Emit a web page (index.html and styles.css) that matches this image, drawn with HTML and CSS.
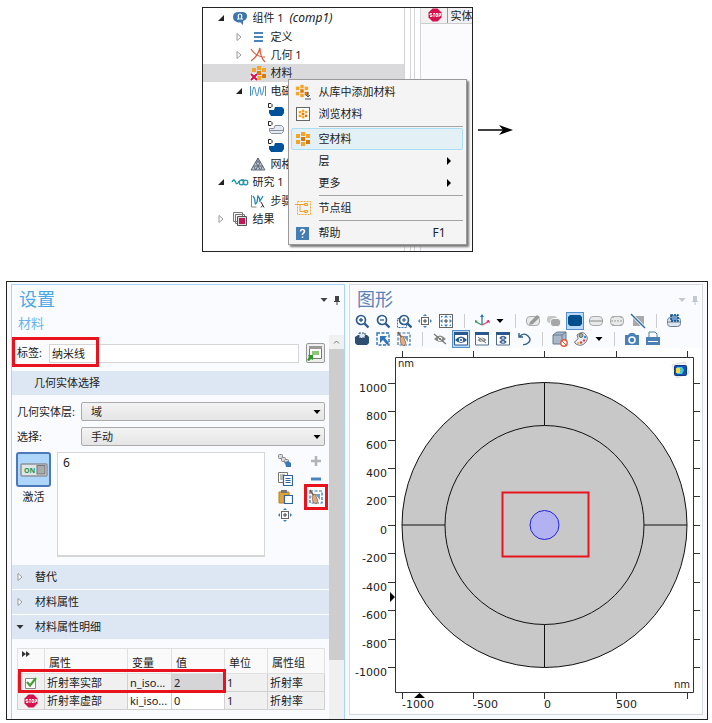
FILE: index.html
```html
<!DOCTYPE html>
<html lang="zh-CN">
<head>
<meta charset="utf-8">
<meta name="viewport" content="width=device-width, initial-scale=1">
<title>材料设置</title>
<link rel="stylesheet" href="styles.css">
</head>
<body>
<svg class="defs" aria-hidden="true">
  <symbol id="blocks" viewBox="0 0 16 16">
    <g fill="#f5a42a"><rect x="6" y="1" width="4" height="4"/><rect x="1" y="3" width="4" height="4"/><rect x="11" y="3" width="4" height="4"/><rect x="1" y="9" width="4" height="4"/><rect x="6" y="11" width="4" height="4"/></g>
    <g fill="#d9780c"><rect x="6" y="6" width="4" height="4"/><rect x="11" y="9" width="4" height="4"/></g>
  </symbol>
  <symbol id="open" viewBox="0 0 12 12"><path d="M9 3v6H3z" fill="#222"/></symbol>
  <symbol id="closed" viewBox="0 0 12 12"><path d="M4 2.500v7L8 6z" fill="#fff" stroke="#999"/></symbol>
  <symbol id="down" viewBox="0 0 10 10"><path d="M1.500 3h7L5 7z" fill="currentColor"/></symbol>
  <symbol id="pin" viewBox="0 0 10 10"><path d="M3 1h4v5h1v1H5.500v3h-1V7H2V6h1z" fill="currentColor"/></symbol>
  <symbol id="stop" viewBox="0 0 14 14"><path d="M4.500 .5h5l4 4v5l-4 4h-5l-4-4v-5z" fill="#d5104c"/><path d="M4 5.500H2v1.500h2v1.500H2M5 5.500h2M6 5.500v3.500M8 5.500h1.500v3H8zM11 9V5.500h1.500v2H11" fill="none" stroke="#fff" stroke-width=".9"/></symbol>
  <symbol id="domain" viewBox="0 0 18 16"><path d="M8 5h7l2 2v4l-2 3H4l-2-3V8h5z" fill="#00529b"/><path d="M1.500 1.500h2.500l1 1v2l-1 1H1.500z" fill="#fff" stroke="#222"/></symbol>
  <symbol id="lens" viewBox="0 0 16 16"><circle cx="7" cy="7" r="4.500" fill="#fff" stroke="#2b5a8c" stroke-width="1.700"/><path d="M10.500 10.500l4 4" stroke="#2b5a8c" stroke-width="2.400"/></symbol>
  <symbol id="target" viewBox="0 0 16 16"><rect x="4.500" y="4.500" width="7" height="7" fill="#fff" stroke="#666"/><path d="M8 6v4M6 8h4" stroke="#444"/><path d="M8 1l2 2H6zM8 15l2-2H6zM1 8l2-2v4zM15 8l-2-2v4z" fill="#3e7fbe"/></symbol>
  <symbol id="broom" viewBox="0 0 16 16"><rect x="2" y="2" width="12" height="12" fill="none" stroke="#3474b4" stroke-width="1.200" stroke-dasharray="3 1.500"/><path d="M7 5h5v6z" fill="#6f9fd0"/><path d="M2 1l4 6" stroke="#8a5a32" stroke-width="1.500"/><path d="M4 7l3-2 3 7-2 3-3-2z" fill="#d8ad87" stroke="#9a683e" stroke-width=".8"/></symbol>
  <symbol id="eye" viewBox="0 0 16 16"><path d="M2 8q6-7 12 0-6 6-12 0z" fill="currentColor"/><circle cx="8" cy="8" r="2.200" fill="#fff"/><circle cx="8" cy="8" r="1.100" fill="currentColor"/></symbol>
  <symbol id="slab" viewBox="0 0 16 16"><rect x="1.500" y="3.500" width="13" height="9" rx="3.500" fill="#e9e9eb" stroke="#aaa"/></symbol>
</svg>

<main class="page">
<section class="intro" aria-label="模型开发器">
  <div class="window builder">
    <nav class="tree" aria-label="模型树">
      <ul>
        <li><div class="row"><svg class="twist"><use href="#open"/></svg><svg class="node" viewBox="0 0 18 16"><path d="M2 7q0-5 6-5h3q5 0 5 4 0 4-4 5v4l-3-3q-1 1-3 0-4-1-4-5z" fill="#3d76ad"/><path d="M6 9h2Q6 4 9 4t1 5h2" fill="none" stroke="#fff" stroke-width="1.200"/></svg><span>组件 1&nbsp; <i>(comp1)</i></span></div>
          <ul>
            <li><div class="row level2"><svg class="twist"><use href="#closed"/></svg><svg class="node" viewBox="0 0 18 16"><path d="M5 4h9M5 8h9M5 12h9" stroke="#4a83bd" stroke-width="1.800"/></svg><span>定义</span></div></li>
            <li><div class="row level2"><svg class="twist"><use href="#closed"/></svg><svg class="node" viewBox="0 0 18 16"><path d="M2 2q5 8 14 8M2 14Q9 9 11 1q0 9 5 14" fill="none" stroke="#dd5a3d" stroke-width="1.200"/></svg><span>几何 1</span></div></li>
            <li><div class="row level2 current"><span class="twist"></span><svg class="node" viewBox="0 0 18 16"><use href="#blocks" x="2" width="16" height="16"/><path d="M2 9l6 6M8 9l-6 6" stroke="#fff" stroke-width="4"/><path d="M2 9l6 6M8 9l-6 6" stroke="#d5104c" stroke-width="2"/></svg><span>材料</span></div></li>
            <li><div class="row level2"><svg class="twist"><use href="#open"/></svg><svg class="node" viewBox="0 0 18 16"><path d="M1.500 3v10M16.500 3v10M3 12q2-14 3.500-4t3 0q1-8 2 0t2.500 1l1-6" fill="none" stroke="#4a8fc7"/></svg><span>电磁</span></div>
              <ul>
                <li><div class="row level3"><span class="twist"></span><svg class="node"><use href="#domain"/></svg></div></li>
                <li><div class="row level3"><span class="twist"></span><svg class="node" viewBox="0 0 18 16"><path d="M8 5.500h6.500l2 2v4l-2 2h-10l-2-2v-3H7zM2.500 10.500h14" fill="#e6ebf2" stroke="#87919d"/><path d="M1.500 1.500h2.500l1 1v2l-1 1H1.500z" fill="#fff" stroke="#222"/></svg></div></li>
                <li><div class="row level3"><span class="twist"></span><svg class="node"><use href="#domain"/></svg></div></li>
              </ul>
            </li>
            <li><div class="row level2"><span class="twist"></span><svg class="node" viewBox="0 0 18 16"><path d="M9 2l7 12H2zM6.500 6h5M4.500 10h9M6.500 6l5 8M11.500 6l-5 8M4.500 10l2 4M13.500 10l-2 4M9 2v4" fill="#bac4cf" stroke="#56616d" stroke-width=".9"/></svg><span>网格</span></div></li>
          </ul>
        </li>
        <li><div class="row"><svg class="twist"><use href="#open"/></svg><svg class="node" viewBox="0 0 18 16"><path d="M1 8q2-4 3.500 0t3.500-1" fill="none" stroke="#2096a3" stroke-width="1.300"/><circle cx="10.500" cy="8.500" r="2.300" fill="none" stroke="#2096a3" stroke-width="1.300"/><circle cx="14.500" cy="8.500" r="2.300" fill="none" stroke="#2096a3" stroke-width="1.300"/><path d="M10 6q2-1 3 0" fill="none" stroke="#2096a3"/></svg><span>研究 1</span></div>
          <ul>
            <li><div class="row level2"><span class="twist"></span><svg class="node" viewBox="0 0 18 16"><path d="M2.500 2v12h5" fill="none" stroke="#888"/><path d="M4 3q2 2 2 6t2 0l1-6q2 2 2 6M11 8l3-5" fill="none" stroke="#2387b4" stroke-width="1.300"/><path d="M12 9l3 5.500M14 12l-2 2.500" stroke="#333" fill="none"/></svg><span>步骤</span></div></li>
          </ul>
        </li>
        <li><div class="row"><svg class="twist"><use href="#closed"/></svg><svg class="node" viewBox="0 0 18 16"><path d="M2.500 1.500h9v9h-9zM4.500 3.500h9v9h-9z" fill="#f5f5f5" stroke="#777"/><path d="M6.500 5.500h9v9h-9z" fill="#ddd" stroke="#555"/><path d="M8 7h6v6H8z" fill="#c3175c"/></svg><span>结果</span></div></li>
      </ul>
    </nav>
    <div class="splitter"></div>
    <div class="side">
      <div class="side-head"><svg class="stop"><use href="#stop"/></svg><span>实体</span></div>
      <div class="side-body"></div>
    </div>
    <div class="menu" role="menu">
      <button role="menuitem"><svg viewBox="0 0 16 16"><use href="#blocks" width="14" height="14"/><path d="M13 8v5M11 11l2 2 2-2M10 15h6" fill="none" stroke="#555"/></svg><span>从库中添加材料</span></button>
      <button role="menuitem"><svg viewBox="0 0 16 16"><rect x="1.500" y="1.500" width="13" height="13" fill="#fff" stroke="#666"/><use href="#blocks" x="3" y="3" width="10" height="10"/></svg><span>浏览材料</span></button>
      <hr>
      <button role="menuitem" class="hot"><svg><use href="#blocks"/></svg><span>空材料</span></button>
      <button role="menuitem"><svg></svg><span>层</span><svg class="more" viewBox="0 0 6 8"><path d="M1 0l4 4-4 4z"/></svg></button>
      <button role="menuitem"><svg></svg><span>更多</span><svg class="more" viewBox="0 0 6 8"><path d="M1 0l4 4-4 4z"/></svg></button>
      <hr>
      <button role="menuitem"><svg viewBox="0 0 16 16"><rect x="2.500" y="1.500" width="13" height="13" fill="none" stroke="#f0ab36" stroke-dasharray="2 1"/><path d="M0 4.500h5v7h4M5 4.500h4" fill="none" stroke="#efa22e"/><path d="M9.500 3.500h3v2h-3zM9.500 10.500h3v2h-3z" fill="#fbe2b2" stroke="#efa22e"/></svg><span>节点组</span></button>
      <hr>
      <button role="menuitem"><svg viewBox="0 0 16 16"><rect x="1" y="2" width="13" height="13" fill="#477db5"/><path d="M5.500 6.500q0-2 2-2t2 2q0 1-2 2.500v1M7.500 11.500v1.500" fill="none" stroke="#fff" stroke-width="1.500"/></svg><span>帮助</span><kbd>F1</kbd></button>
    </div>
  </div>
  <svg class="arrow" viewBox="0 0 35 10"><path d="M0 5h25" stroke="#000" stroke-width="1.500"/><path d="M21 0l14 5-14 5 4-5z"/></svg>
</section>

<section class="window desk">
  <section class="panel settings">
    <header class="head"><h2>设置</h2><svg class="mini"><use href="#down"/></svg><svg class="mini"><use href="#pin"/></svg></header>
    <p class="subtitle">材料</p>
    <div class="scroller">
      <div class="content">
        <div class="name-row">
          <label for="name">标签:</label><input id="name" type="text" value="纳米线">
          <button class="tool-box" aria-label="转到源"><svg viewBox="0 0 16 16"><path d="M2.500 1.500h12v12h-12z" fill="#fff" stroke="#777"/><path d="M2 1h13v3H2z" fill="#999"/><path d="M5 7h7M5 9h7" stroke="#69b34b" stroke-width="1.500"/><path d="M0 15l2-3-1-2h5v5l-2-1-2 2z" fill="#319332"/></svg></button>
          <span class="mark mark-name"></span>
        </div>
        <h3 class="bar plain">几何实体选择</h3>
        <div class="form">
          <label for="level">几何实体层:</label>
          <span class="pick"><select id="level"><option>域</option></select><svg><use href="#down"/></svg></span>
          <label for="choice">选择:</label>
          <span class="pick"><select id="choice"><option>手动</option></select><svg><use href="#down"/></svg></span>
        </div>
        <div class="selection">
          <div class="active"><button id="active" aria-labelledby="active-label"><svg viewBox="0 0 28 14"><rect x="1" y="1" width="26" height="12" rx="1" fill="#dfe5e6" stroke="#8d949b" stroke-width="1.500"/><rect x="17" y="2.500" width="8" height="8.500" fill="#aaa" stroke="#777"/><text x="4" y="10">ON</text></svg></button><label id="active-label" for="active">激活</label></div>
          <div class="list">6</div>
          <div class="icons">
            <button aria-label="创建选择"><svg viewBox="0 0 16 16"><g fill="#ddd" stroke="#888"><rect x="1.500" y="1.500" width="4" height="4" rx="1"/><rect x="4.500" y="4.500" width="4" height="4" rx="1"/><rect x="7.500" y="6.500" width="4" height="4" rx="1"/></g><path d="M8 9l3-1 3 2v4H9z" fill="#3c78b4"/></svg></button>
            <button aria-label="添加到选择"><svg viewBox="0 0 16 16"><path d="M8 3v10M3 8h10" stroke="#b3b3b5" stroke-width="2.500"/></svg></button>
            <button aria-label="复制选择"><svg viewBox="0 0 16 16"><path d="M1.500 1.500h9v10h-9zM3 4h5M3 6h5M3 8h3" fill="#fff" stroke="#777"/><path d="M6.500 4.500h9v10h-9zM8.500 7.500h5M8.500 9.500h5M8.500 11.500h5" fill="#fff" stroke="#2f659f" stroke-width="1.200"/></svg></button>
            <button aria-label="从选择中移除"><svg viewBox="0 0 16 16"><path d="M3 8h10" stroke="#4a84c0" stroke-width="3"/></svg></button>
            <button aria-label="粘贴选择"><svg viewBox="0 0 16 16"><path d="M2 3h10v11H2z" fill="#dda33b" stroke="#b77e1e"/><path d="M4 1h6v3H4z" fill="#777"/><path d="M7.500 6.500h8v8h-8z" fill="#fff" stroke="#2f659f" stroke-width="1.200"/></svg></button>
            <button aria-label="清除选择"><svg><use href="#broom"/></svg><span class="mark mark-icon"></span></button>
            <button aria-label="缩放到选择"><svg><use href="#target"/></svg></button>
          </div>
        </div>
        <div class="bars">
          <h3 class="bar"><svg class="twist"><use href="#closed"/></svg>替代</h3>
          <h3 class="bar"><svg class="twist"><use href="#closed"/></svg>材料属性</h3>
          <h3 class="bar"><svg class="twist" viewBox="-1 -1 12 12"><use href="#down" width="10" height="10"/></svg>材料属性明细</h3>
        </div>
        <div class="table-wrap">
          <table>
            <colgroup><col class="c-state"><col class="c-prop"><col class="c-var"><col class="c-value"><col class="c-unit"><col class="c-group"></colgroup>
            <thead><tr><th class="first"><svg viewBox="0 0 8 6"><path d="M0 0l4 3-4 3zM4 0l4 3-4 3z" fill="#333"/></svg></th><th>属性</th><th>变量</th><th>值</th><th>单位</th><th>属性组</th></tr></thead>
            <tbody>
              <tr><td class="state"><svg viewBox="0 0 14 14"><path d="M1.500 2.500h10v10h-10z" fill="#fff" stroke="#888"/><path d="M3 6l3 3.500 6-7.500" fill="none" stroke="#46a02e" stroke-width="2.200"/></svg></td><td>折射率实部</td><td>n_iso...</td><td class="chosen">2</td><td>1</td><td>折射率</td></tr>
              <tr><td class="state"><svg><use href="#stop"/></svg></td><td>折射率虚部</td><td class="edit">ki_iso...</td><td class="edit">0</td><td>1</td><td>折射率</td></tr>
            </tbody>
          </table>
          <span class="mark mark-row"></span>
        </div>
      </div>
      <div class="scrollbar"><svg viewBox="0 0 15 14"><path d="M5 8.500L7.500 6 10 8.500" fill="none" stroke="#777"/></svg><span class="thumb"></span></div>
    </div>
  </section>

  <section class="panel graphics">
    <header class="head"><h2>图形</h2><svg class="mini"><use href="#down"/></svg><svg class="mini"><use href="#pin"/></svg></header>
    <div class="toolbar">
      <button aria-label="放大"><svg viewBox="0 0 16 16"><use href="#lens"/><path d="M7 5v4M5 7h4" stroke="#2b5a8c" stroke-width="1.300"/></svg></button>
      <button aria-label="缩小"><svg viewBox="0 0 16 16"><use href="#lens"/><path d="M5 7h4" stroke="#2b5a8c" stroke-width="1.300"/></svg></button>
      <button aria-label="框选缩放"><svg viewBox="0 0 16 16"><path d="M1.500 5.500h9v9h-9z" fill="none" stroke="#3d6fa4" stroke-dasharray="2 1"/><use href="#lens" x="1" width="16" height="16"/><path d="M8 5v4M6 7h4" stroke="#2b5a8c" stroke-width="1.200"/></svg></button>
      <button aria-label="缩放到选择"><svg><use href="#target"/></svg></button>
      <button aria-label="缩放到窗口大小"><svg viewBox="0 0 16 16"><rect x="1.500" y="1.500" width="13" height="13" fill="#fff" stroke="#666"/><path d="M8 6v4M6 8h4" stroke="#444"/><path d="M8 2l2 2.500H6zM8 14l2-2.500H6zM2 8l2.500-2v4zM14 8l-2.500-2v4zM3 3h2L3 5zM13 3h-2l2 2zM3 13h2l-2-2zM13 13h-2l2-2z" fill="#3e7fbe"/></svg></button>
      <span class="sep"></span>
      <button aria-label="视图方向"><svg viewBox="0 0 16 16"><path d="M8 12V2" stroke="#2878b8" stroke-width="1.300"/><path d="M8 12l-6-3" stroke="#35a05b" stroke-width="1.300"/><path d="M8 12l6-3" stroke="#d3456b" stroke-width="1.300"/><path d="M6 4l2-3 2 3z" fill="#2878b8"/><path d="M1 10V7l3 1z" fill="#35a05b"/><path d="M16 10l-1-3-3 1z" fill="#d3175c"/></svg></button>
      <button class="caret" aria-label="更多视图"><svg><use href="#down"/></svg></button>
      <span class="sep"></span>
      <button aria-label="无选择"><svg viewBox="0 0 16 16"><use href="#slab"/><path d="M4 12l1-3 7-7 3 2-7 7z" fill="#999"/></svg></button>
      <button aria-label="选择对象"><svg viewBox="0 0 16 16"><rect x="1" y="3" width="10" height="7" rx="3" fill="#c6c6c8"/><rect x="4.500" y="5.500" width="10" height="8" rx="3" fill="#a6a6a8" stroke="#fafafa"/></svg></button>
      <button class="on" aria-label="选择域"><svg viewBox="0 0 16 16"><path d="M3 2h10l2 2v7l-2 2H3l-2-2V4z" fill="#00508f"/></svg></button>
      <button aria-label="选择边界"><svg viewBox="0 0 16 16"><use href="#slab"/><path d="M1 8h14" stroke="#888"/></svg></button>
      <button aria-label="选择点"><svg viewBox="0 0 16 16"><use href="#slab"/><path d="M2 8h12M4 3v2M12 3v2M4 11v2M12 11v2" stroke="#999" stroke-dasharray="2 1"/></svg></button>
      <button aria-label="取消选择"><svg viewBox="0 0 16 16"><path d="M3 3h11v10H3z" fill="#a9a9ab"/><path d="M1 1l14 14" stroke="#fff" stroke-width="3"/><path d="M1 1l14 14" stroke="#2e6da6" stroke-width="1.500"/></svg></button>
      <span class="sep"></span>
      <button aria-label="选择框"><svg viewBox="0 0 16 16"><rect x="1.500" y="4.500" width="13" height="9" rx="3" fill="#dfe5ec" stroke="#68809b"/><path d="M1 9h14" stroke="#68809b"/><path d="M5 2h7v6H5z" fill="#6c9ccb" stroke="#00508f" stroke-width="1.500" stroke-dasharray="2 1"/></svg></button>
    </div>
    <div class="toolbar">
      <button aria-label="隐藏框"><svg viewBox="0 0 16 16"><path d="M1 6l3-2h9l2 2v6l-2 2H3l-2-2z" fill="#2d4d72"/><path d="M5 2h6v5H5z" fill="#dce7f2" stroke="#2d4d72" stroke-dasharray="2 1"/></svg></button>
      <button aria-label="选择框"><svg viewBox="0 0 16 16"><rect x="2" y="2" width="12" height="12" fill="none" stroke="#3474b4" stroke-width="1.400" stroke-dasharray="3 1.500"/><path d="M5 5h7l-2 2 4 5-2 2-4-5-3 3z" fill="#3474b4"/></svg></button>
      <button aria-label="清除选择"><svg><use href="#broom"/></svg></button>
      <span class="sep"></span>
      <button class="grey" aria-label="隐藏"><svg viewBox="0 0 16 16"><use href="#eye"/><path d="M2 3l12 10" stroke="#777" stroke-width="1.300"/></svg></button>
      <button class="on view" aria-label="显示"><svg viewBox="0 0 16 16"><path d="M1.500 2v12h13V2" fill="#fff" stroke="#2b578b"/><path d="M1 1h14v3H1z" fill="#2b578b"/><use href="#eye" y="1" width="16" height="16"/></svg></button>
      <button class="view" aria-label="仅显示隐藏"><svg viewBox="0 0 16 16"><path d="M1.500 2v12h13V2" fill="#fff" stroke="#526c88"/><path d="M1 1h14v3H1z" fill="#2b578b"/><use class="grey" href="#eye" x="2" y="3" width="12" height="12"/><path d="M4 6l8 6" stroke="#777"/></svg></button>
      <button class="view" aria-label="显示全部"><svg viewBox="0 0 16 16"><path d="M1.500 2v12h13V2" fill="#fff" stroke="#526c88"/><path d="M1 1h14v3H1z" fill="#2b578b"/><use href="#eye" x="3" y="2" width="10" height="10"/><use href="#eye" x="3" y="6" width="10" height="10"/></svg></button>
      <button aria-label="重置隐藏"><svg viewBox="0 0 16 16"><path d="M3.500 5.500Q8 1 12 5t0 7q-2 2-5 1.500M3 2v4h4" fill="none" stroke="#315f8d" stroke-width="1.400"/></svg></button>
      <span class="sep"></span>
      <button aria-label="透明度"><svg viewBox="0 0 16 16"><path d="M1 4l4-3h9v8l-4 4H1z" fill="#a8b9ca" stroke="#667b91"/><path d="M1 4h9v9M10 4l4-3" fill="none" stroke="#667b91"/><circle cx="12" cy="12" r="3.200" fill="#fff" stroke="#dd5a3d" stroke-width="1.400"/><path d="M10 10l4 4" stroke="#dd5a3d"/></svg></button>
      <button aria-label="颜色"><svg viewBox="0 0 16 16"><path d="M4 4q6-5 9 0 3 4-1 8-4 4-9 1-3-2 1-4 2-1 0-5z" fill="#eee" stroke="#777"/><circle cx="8" cy="4.500" r="2" fill="#aaa" stroke="#666"/><circle cx="12" cy="6" r="1.200" fill="#2a91d0"/><circle cx="11" cy="9.500" r="1.200" fill="#e0447c"/><circle cx="8" cy="11.500" r="1.200" fill="#db384d"/><circle cx="5" cy="12" r="1.100" fill="#efb32d"/></svg></button>
      <button class="caret" aria-label="更多颜色"><svg><use href="#down"/></svg></button>
      <span class="sep"></span>
      <button aria-label="图像快照"><svg viewBox="0 0 16 16"><path d="M1 4h3l2-2h4l2 2h3v10H1z" fill="#4b80b6"/><circle cx="8" cy="9" r="3" fill="#4b80b6" stroke="#fff" stroke-width="1.500"/></svg></button>
      <button aria-label="打印"><svg viewBox="0 0 16 16"><path d="M4 6V1h6l2 2v3" fill="#fff" stroke="#4b80b6"/><path d="M1 6h14v8H1z" fill="#4b80b6"/><path d="M3 10h10v1H3z" fill="#fff"/></svg></button>
    </div>
    <svg class="plot" viewBox="350 348 352 365" role="img" aria-label="几何图形">
      <path class="axis" d="M395.500 357.500h298v335h-298zM402.500 351v6M473.500 351v6M544.500 351v6M616.500 351v6M687.500 351v6M402.500 693v6M473.500 693v6M544.500 693v6M616.500 693v6M687.500 693v6M388 383.500h7M388 411.500h7M388 440.500h7M388 468.500h7M388 496.500h7M388 525.500h7M388 553.500h7M388 582.500h7M388 610.500h7M388 639.500h7M388 667.500h7M694 383.500h6M694 411.500h6M694 440.500h6M694 468.500h6M694 496.500h6M694 525.500h6M694 553.500h6M694 582.500h6M694 610.500h6M694 639.500h6M694 667.500h6"/>
      <g class="shape"><circle cx="544.500" cy="525" r="142.500"/><circle cx="544.500" cy="525" r="99.500"/><path d="M544.500 382.500v43M544.500 624.500v43M402 525h43M644 525h43"/></g>
      <circle class="wire" cx="544.500" cy="525" r="14.500"/>
      <rect class="frame" x="502.500" y="492.500" width="86" height="64"/>
      <path d="M390 592l5 5-5 5zM414 698l5.500-5 5.500 5z"/>
      <g class="y-labels"><text x="387" y="392">1000</text><text x="387" y="420">800</text><text x="387" y="449">600</text><text x="387" y="477">400</text><text x="387" y="505">200</text><text x="387" y="534">0</text><text x="387" y="562">-200</text><text x="387" y="591">-400</text><text x="387" y="619">-600</text><text x="387" y="648">-800</text><text x="387" y="676">-1000</text></g>
      <g class="x-labels"><text x="402" y="708">-1000</text><text x="473" y="708">-500</text><text x="544" y="708">0</text><text x="616" y="708">500</text></g>
      <g class="units"><text x="398" y="367">nm</text><text x="674" y="688">nm</text></g>
      <path d="M672 365l13-3 4 11-12 5z" fill="#f3f3f3" stroke="#ddd"/><rect x="674.500" y="365.500" width="12" height="10" rx="1" fill="#1254b3" stroke="#123a80"/><path d="M677 367h5l2 3-2 4h-5z" fill="#45c7d8"/><path d="M676 368h4v5h-4z" fill="#f4dc3c"/>
    </svg>
  </section>
</section>
</main>
</body>
</html>
```
FILE: styles.css
```css
* { box-sizing: border-box; }
body { margin: 0; background: #fff; color: #222; font: 11px/18px "Noto Sans", "Noto Sans CJK SC", sans-serif; }
h2, h3, p, ul { margin: 0; padding: 0; font-weight: 400; }
ul { list-style: none; }
button { margin: 0; padding: 0; border: 0; background: none; color: inherit; font: inherit; }
input, select { min-width: 0; font: inherit; color: inherit; }
svg { display: block; flex: none; }
.defs { position: absolute; width: 0; height: 0; }
.page { display: grid; gap: 29px; padding: 7px 4px 4px 6px; }
.window { border: 1px solid #222; overflow: hidden; }

.intro { display: flex; justify-content: center; align-items: center; gap: 5px; }
.arrow { width: 35px; height: 10px; }
.builder { position: relative; display: flex; width: 271px; }
.tree { flex: 1; padding: 1px 0 23px; }
.tree ul ul { padding-top: 1px; }
.tree i { font-size: 12px; }
.row { display: flex; align-items: center; gap: 4px; height: 18px; padding-left: 12px; white-space: nowrap; }
.level2 { padding-left: 30px; }
.level3 { padding-left: 48px; }
.current { background: #dadadc; }
.twist { width: 12px; height: 12px; flex: none; }
.node { width: 18px; height: 16px; }
.splitter { width: 17px; border: solid #d5d5da; border-width: 0 1px; background: linear-gradient(90deg, #fff 5px, #d5d5da 5px 6px, #fff 6px 9px, #d5d5da 9px 10px, #fff 10px); }
.side { width: 51px; display: flex; flex-direction: column; }
.side-head { display: flex; height: 16px; overflow: hidden; background: #f1f1f1; border-bottom: 1px solid #ccc; line-height: 15px; white-space: nowrap; }
.side-head span { padding-left: 3px; border-left: 1px solid #999; }
.stop { width: 14px; height: 14px; margin: 0 5px 0 7px; }
.side-body { flex: 1; background: #fbfbfe; }

.menu { position: absolute; left: 85px; top: 71px; width: 179px; padding: 1px 3px 0 2px; border: 1px solid #999; background: #f4f4f4; box-shadow: 2px 2px 2px #777; }
.menu button { display: flex; align-items: center; gap: 8px; width: 100%; height: 22px; padding: 0 10px 0 3px; border: 1px solid transparent; border-radius: 2px; text-align: left; }
.menu button > svg { width: 16px; height: 16px; }
.menu button > .more { width: 6px; height: 8px; }
.menu span { flex: 1; white-space: nowrap; }
.menu .hot { border-color: #a9def5; background: #e3f0f6; }
.menu hr { height: 1px; margin: 1px 0 1px 28px; border: 0; background: #a5a5a5; }
kbd { padding-right: 6px; font: inherit; font-size: 12px; }

.desk { display: grid; grid-template-columns: 334fr 354fr; gap: 4px; padding: 2px 4px 0; background: #f8fafd; }
.panel { min-width: 0; border: 1px solid #d5d8df; background: #f9fbff; }
.settings { display: flex; flex-direction: column; border-color: #a8d6fa; border-bottom: 0; }
.head { display: flex; align-items: center; gap: 3px; height: 27px; padding: 2px 2px 0 7px; }
.head h2 { flex: 1; font-size: 18px; line-height: 25px; color: #4aa7e8; }
.graphics .head h2 { color: #5c82b8; }
.mini { width: 10px; height: 10px; color: #444; }
.graphics .mini { color: #c2c8d3; }
.subtitle { height: 23px; padding-left: 6px; font-size: 13px; line-height: 23px; color: #69b5ea; }
.scroller { flex: 1; display: flex; }
.content { flex: 1; min-width: 0; }
.scrollbar { display: flex; flex-direction: column; width: 15px; background: #f0f0f0; }
.scrollbar svg { width: 15px; height: 14px; }
.thumb { flex: 0 1 81%; background: #cdcdcd; }
.name-row { position: relative; display: flex; align-items: center; height: 36px; padding: 0 4px 0 5px; }
.name-row label { width: 32px; }
.name-row input { flex: 1; height: 19px; padding: 0 2px; border: 1px solid #d5d5d8; background: #fff; }
.tool-box { margin-left: 7px; width: 19px; height: 20px; border: 1px solid #999; border-radius: 2px; background: #eee; }
.tool-box svg { width: 16px; height: 16px; }
.mark { position: absolute; border: 3px solid #e8131d; pointer-events: none; }
.mark-name { left: 0; top: 2px; width: 87px; height: 30px; }
.bar { display: flex; align-items: center; gap: 9px; height: 24px; padding-left: 2px; background: #dde7f3; font-size: 11px; }
.plain { padding-left: 22px; }
.form { display: grid; grid-template-columns: 64px 1fr; gap: 6px 0; padding: 7px 4px 6px 5px; }
.form label { line-height: 19px; white-space: nowrap; }
.pick { display: grid; align-items: center; }
.pick > * { grid-area: 1 / 1; }
.pick select { appearance: none; width: 100%; height: 19px; padding: 0 9px; border: 1px solid #aaa; border-radius: 2px; background: linear-gradient(#f3f3f3, #e5e5e5); }
.pick svg { justify-self: end; width: 10px; height: 10px; margin-right: 3px; color: #000; pointer-events: none; }
.selection { display: flex; padding: 0 4px 8px; }
.active { display: flex; flex-direction: column; align-items: center; gap: 1px; width: 35px; }
.active button { display: grid; place-items: center; width: 35px; height: 35px; border: 2px solid #4c79b8; border-radius: 3px; background: #aed6fb; }
.active svg { width: 28px; height: 14px; }
.active text { font: 700 7px "Noto Sans", sans-serif; fill: #249745; }
.list { flex: 1; min-height: 105px; margin: 0 12px 0 6px; padding: 1px 5px; border: 1px solid #d6d6d6; border-bottom-width: 2px; background: #fff; font-size: 12px; }
.icons { display: grid; grid-template-columns: 16px 16px; grid-auto-rows: 18px; column-gap: 15px; align-content: start; width: 48px; }
.icons button { position: relative; }
.icons svg { width: 16px; height: 16px; }
.mark-icon { left: -4px; top: -4px; width: 24px; height: 26px; }
.bars { display: grid; gap: 1px; background: #fff; }
.bars .twist { color: #333; }
.table-wrap { position: relative; padding: 9px 4px 9px 5px; }
table { width: 100%; table-layout: fixed; border-collapse: collapse; background: #f0f0f0; }
.c-state { width: 27px; } .c-prop { width: 83px; } .c-var { width: 44px; } .c-value { width: 53px; } .c-unit { width: 43px; }
th, td { padding: 0 2px; border: 1px solid #d0d0d0; text-align: left; font-weight: 400; line-height: 17px; white-space: nowrap; overflow: hidden; }
th { height: 25px; padding: 3px 4px 0; background: #fafafa; border-color: #e0e0e0; }
th.first { padding: 2px 4px; vertical-align: top; }
th svg { width: 8px; height: 6px; }
td { height: 18px; }
.state svg { width: 14px; height: 14px; margin: 0 auto; }
.chosen { background: #d5d5d8; }
.edit { background: #fff; }
.mark-row { left: 6px; top: 30px; width: 208px; height: 24px; }

.graphics { display: flex; flex-direction: column; margin-bottom: 4px; }
.toolbar { display: flex; align-items: center; gap: 5px; height: 18px; padding-left: 4px; }
.toolbar button, .toolbar svg { width: 16px; height: 16px; }
.toolbar .caret, .toolbar .caret svg { width: 10px; height: 10px; color: #000; }
.toolbar .on { outline: 1px solid #578fca; background: #b9daf8; }
.sep { width: 10px; height: 14px; background: linear-gradient(#ccc, #ccc) center / 1px 100% no-repeat; }
.grey { color: #888; }
.view { color: #2b578b; }
.plot { width: 100%; height: auto; background: #fff; }
.axis { fill: #fff; stroke: #333; }
.shape { fill: #c8c8c8; stroke: #111; }
.wire { fill: #b2b2f2; stroke: #2222dd; }
.frame { fill: none; stroke: #e8131d; stroke-width: 2; }
.plot text { font: 11px "DejaVu Sans", sans-serif; fill: #222; }
.plot .units text { font-size: 10px; }
.y-labels { text-anchor: end; }
```
